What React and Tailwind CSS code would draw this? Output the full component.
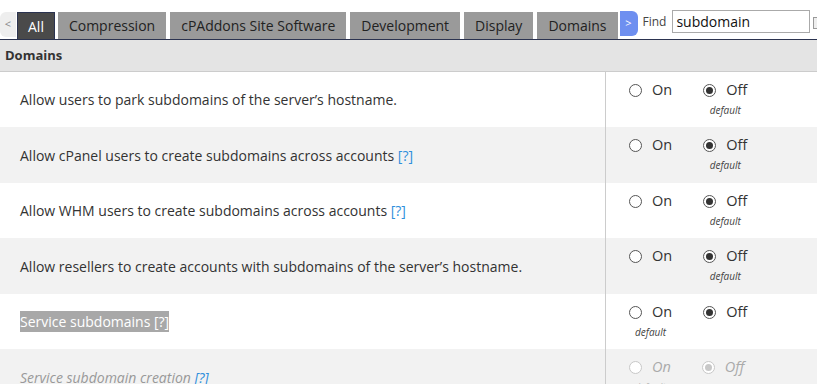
import React from 'react'

const tabs = ['Compression', 'cPAddons Site Software', 'Development', 'Display', 'Domains']

const rows = [
  { text: 'Allow users to park subdomains of the server’s hostname.', help: false, on: false, def: 'off' },
  { text: 'Allow cPanel users to create subdomains across accounts', help: true, on: false, def: 'off' },
  { text: 'Allow WHM users to create subdomains across accounts', help: true, on: false, def: 'off' },
  { text: 'Allow resellers to create accounts with subdomains of the server’s hostname.', help: false, on: false, def: 'off' },
  { text: 'Service subdomains', help: true, on: false, def: 'on', selected: true },
  { text: 'Service subdomain creation', help: true, on: false, def: 'on', disabled: true },
]

function Radio({ checked, disabled }) {
  return (
    <span
      className={`w-[13px] h-[13px] rounded-full border flex items-center justify-center bg-white ${
        disabled ? 'border-[#c8c8c8]' : 'border-[#555]'
      }`}
    >
      {checked && (
        <span className={`w-[7px] h-[7px] rounded-full ${disabled ? 'bg-[#c8c8c8]' : 'bg-[#333]'}`} />
      )}
    </span>
  )
}

function Option({ label, checked, isDefault, disabled }) {
  return (
    <div className="flex flex-col items-center">
      <div className="flex items-center gap-[10px] h-[20px]">
        <Radio checked={checked} disabled={disabled} />
        <span className={`text-[14.5px] ${disabled ? 'italic text-[#aaa]' : 'text-[#333]'}`}>{label}</span>
      </div>
      <span className={`text-[10px] italic leading-[14px] mt-[3px] ${isDefault ? (disabled ? 'text-[#bbb]' : 'text-[#444]') : 'invisible'}`}>
        default
      </span>
    </div>
  )
}

function App() {
  return (
    <div className="w-[817px] h-[384px] overflow-hidden bg-white font-['Open_Sans',sans-serif] text-[#333]">
      <div className="h-[40px] flex items-end border-b border-[#2b3350] whitespace-nowrap">
        <div className="h-[25px] w-[16px] shrink-0 mb-[2px] bg-[#eee] rounded-l-md flex items-center justify-center text-[11px] text-[#888]">
          &lt;
        </div>
        <div className="h-[27px] shrink-0 ml-[1px] px-[10px] bg-[#4a4a4a] border border-b-0 border-[#2b3350] text-white text-[14px] flex items-center">
          All
        </div>
        <div className="flex items-end gap-[4px] ml-[3px] shrink-0">
          {tabs.map((t) => (
            <div key={t} className="h-[27px] shrink-0 px-[11px] bg-[#9a9a9a] text-[#222] text-[14px] flex items-center">
              {t}
            </div>
          ))}
        </div>
        <div className="h-[25px] w-[18px] shrink-0 ml-[2px] mb-[3px] bg-[#6e8ff0] rounded-r-md flex items-center justify-center text-[11px] text-white">
          &gt;
        </div>
        <div className="self-start mt-[10px] ml-[5px] flex items-center shrink-0">
          <span className="text-[12px] text-[#444]">Find</span>
          <div className="ml-[6px] w-[138px] h-[23px] border border-[#aaa] px-[3px] flex items-center text-[14px] text-[#111]">
            subdomain
          </div>
          <div className="ml-[3px] w-[12px] h-[12px] mt-[2px] border border-[#999] bg-[#eee] flex items-center justify-center text-[9px] text-[#2a7ee0] leading-none">
            x
          </div>
        </div>
      </div>
      <div className="h-[32px] bg-[#e4e4e4] border-b border-[#ccc] flex items-center px-[5px] text-[13px] font-bold text-[#333]">
        Domains
      </div>
      {rows.map((r, i) => (
        <div
          key={i}
          className={`flex ${i % 2 ? 'h-[56px] bg-[#f2f2f2]' : 'h-[55px] bg-white'}`}
        >
          <div className="w-[606px] shrink-0 border-r border-[#ccc] flex items-center pl-[20px] text-[14px]">
            <span
              className={
                r.selected
                  ? 'bg-[#a8a8a8] text-white'
                  : r.disabled
                  ? 'italic text-[#999]'
                  : 'text-[#333]'
              }
            >
              {r.text}
              {r.help && (
                <>
                  {' '}
                  <span className={r.selected ? 'text-white' : 'text-[#2f8fdc]'}>[?]</span>
                </>
              )}
            </span>
          </div>
          <div className="flex-1 flex items-start pt-[8px] pl-[23px] gap-[31px]">
            <Option label="On" checked={r.on} isDefault={r.def === 'on'} disabled={r.disabled} />
            <Option label="Off" checked={!r.on} isDefault={r.def === 'off'} disabled={r.disabled} />
          </div>
        </div>
      ))}
    </div>
  )
}

export default App
